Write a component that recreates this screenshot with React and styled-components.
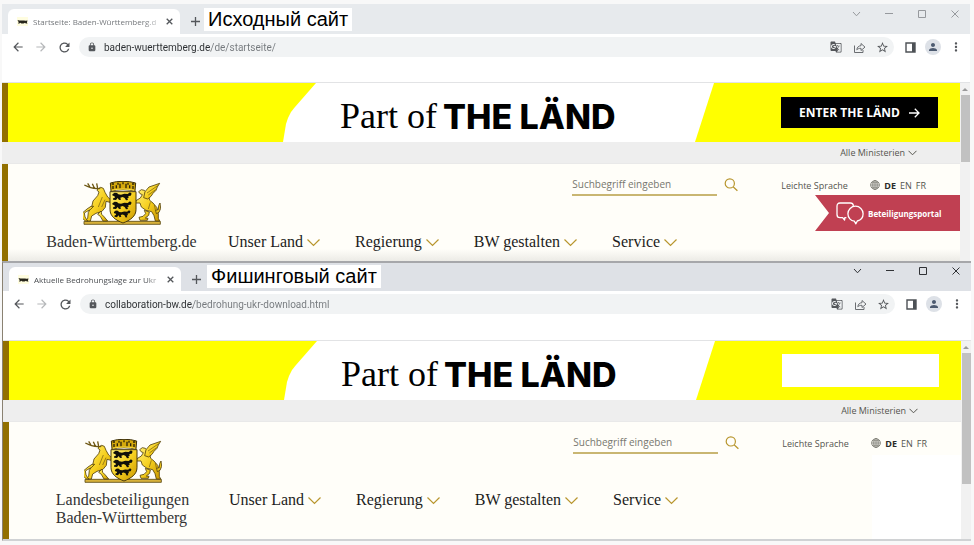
import React from "react";
import styled, { createGlobalStyle, css } from "styled-components";
import {
  MdArrowBack,
  MdArrowForward,
  MdRefresh,
  MdLock,
  MdGTranslate,
  MdStarBorder,
  MdPerson,
  MdMoreVert,
} from "react-icons/md";

const sans = `"Open Sans", "Noto Sans", sans-serif`;
const chromeSans = `Roboto, "Open Sans", sans-serif`;
const serif = `"Liberation Serif", serif`;
const gold = "#b8962e";

const GlobalStyle = createGlobalStyle`
  * { box-sizing: border-box; }
  body { margin: 0; background: #f8f8f8; }
  button, input { font: inherit; color: inherit; border: 0; padding: 0; margin: 0; background: none; }
  button { cursor: pointer; }
  a { color: inherit; text-decoration: none; }
  svg { display: block; flex: none; }
`;

const Page = styled.main`
  padding: 4px 3px 4px 2px;
  font-family: ${sans};
  font-size: 10px;
`;

const Window = styled.section`
  background: #fff;
  ${(p) =>
    p.$front
      ? css`
          border-top: 2px solid #a6a7aa;
          border-left: 1px solid #8a8272;
          border-bottom: 2px solid #d0d2d4;
        `
      : css`
          margin-right: 1px;
        `}
`;

const TabStrip = styled.header`
  display: flex;
  align-items: flex-start;
  height: ${(p) => (p.$front ? 28 : 30)}px;
  padding: 0 7px 0 6px;
  background: ${(p) => (p.$front ? "#dee1e6" : "#e7eaed")};
`;

const Tab = styled.div`
  display: flex;
  align-items: center;
  align-self: stretch;
  gap: 5px;
  width: 172px;
  margin-top: ${(p) => (p.$front ? 4 : 5)}px;
  padding: 0 7px 0 9px;
  border-radius: 6px 6px 0 0;
  background: #fff;
  color: ${(p) => (p.$front ? "#4b4e52" : "#75787c")};
`;

const TabTitle = styled.span`
  flex: 1;
  white-space: nowrap;
  font-size: 8px;
  mask-image: linear-gradient(90deg, #000 88%, rgba(0, 0, 0, 0.15));
`;

const IconButton = styled.button`
  display: grid;
  place-items: center;
  width: ${(p) => p.$size || 16}px;
  height: ${(p) => p.$size || 16}px;
  border-radius: 50%;
  color: ${(p) => p.$color || "#54575b"};
  background: ${(p) => p.$bg || "none"};
`;

const NewTab = styled(IconButton)`
  margin: ${(p) => (p.$front ? "8px 3px 0 7px" : "9px 1px 0 7px")};
`;

const Caption = styled.h2`
  margin: ${(p) => (p.$front ? 2 : 4)}px 0 0;
  padding: 0 4px;
  background: #fff;
  color: #000;
  font: 400 20px/23px "Liberation Sans", Arial, sans-serif;
  white-space: nowrap;
`;

const WindowControls = styled.div`
  display: flex;
  gap: 17px;
  margin-left: auto;
  margin-top: ${(p) => (p.$front ? 0 : 2)}px;
`;

const Toolbar = styled.div`
  display: flex;
  align-items: flex-start;
  height: ${(p) => (p.$front ? 50 : 49)}px;
  padding: 3px 6px 0 8px;
  border-bottom: 1px solid #e2e3e5;
`;

const NavButtons = styled.div`
  display: flex;
  gap: 7px;
  margin: 2px 7px 0 0;
`;

const AddressBar = styled.div`
  flex: 1;
  display: flex;
  align-items: center;
  height: 20px;
  padding: 0 4px 0 8px;
  border-radius: 10px;
  background: #f1f3f4;
  color: #54575b;
`;

const AddressInput = styled.input`
  flex: 1;
  min-width: 0;
  margin-left: 7px;
  outline: 0;
  font-family: ${chromeSans};
  color: transparent;
  background: linear-gradient(90deg, #2b2e31 ${(p) => p.$host}px, #74787c ${(p) => p.$host}px);
  background-clip: text;
`;

const AddressActions = styled.div`
  display: flex;
  gap: 7px;
`;

const BrowserActions = styled.div`
  display: flex;
  gap: 7px;
  margin: 2px 0 0 8px;
`;

const Viewport = styled.div`
  display: flex;
`;

const Site = styled.div`
  position: relative;
  flex: 1;
  min-width: 0;
  color: #55554f;
`;

const ScrollTrack = styled.div`
  display: flex;
  flex-direction: column;
  align-items: center;
  width: 10px;
  background: #f1f1f1;
`;

const ScrollArrow = styled.span`
  margin: 5px 0 4px;
  border: 3px solid transparent;
  border-top: 0;
  border-bottom-color: #9a9a9a;
`;

const ScrollThumb = styled.span`
  align-self: stretch;
  margin-left: 1px;
  height: ${(p) => p.$length}px;
  background: #c1c1c1;
`;

const Banner = styled.div`
  display: flex;
  align-items: center;
  justify-content: space-between;
  height: 59px;
  padding: 0 22px 0 275px;
  border-left: 6px solid #927000;
  background: #ff0;
`;

const BannerPanel = styled.a`
  display: flex;
  align-items: center;
  align-self: stretch;
  gap: 6px;
  width: 431px;
  padding-left: 57px;
  color: #000;
  background: #fff;
  clip-path: polygon(
    33px 0, 100% 0, calc(100% - 19px) 100%, 0 100%,
    3px 41px, 5px 35px, 8px 29px, 12px 24px
  );
  white-space: nowrap;
`;

const BannerSerif = styled.span`
  padding-top: 8px;
  font: 400 36px/59px ${serif};
`;

const BannerHeavy = styled.span`
  padding-top: 8px;
  font: 800 34px/59px Inter, sans-serif;
`;

const EnterButton = styled.a`
  display: flex;
  align-items: center;
  justify-content: center;
  gap: 9px;
  width: 157px;
  height: ${(p) => (p.$blank ? 33 : 31)}px;
  background: ${(p) => (p.$blank ? "#fff" : "#000")};
  color: #fff;
  font-size: 12px;
  font-weight: 700;
  white-space: nowrap;
`;

const MinistryBar = styled.div`
  display: flex;
  justify-content: flex-end;
  height: 22px;
  padding-right: 43px;
  border-bottom: 1px solid #e9e9e9;
  background: #eee;
`;

const MinistryButton = styled.button`
  display: flex;
  align-items: center;
  gap: 3px;
  font-size: 9px;
`;

const SiteHeader = styled.div`
  position: relative;
  display: flex;
  padding: 0 34px ${(p) => (p.$front ? 12 : 9)}px 31px;
  border-left: 6px solid #927000;
  background: ${(p) =>
    p.$front
      ? "#fffef9"
      : "linear-gradient(#fffef9 calc(100% - 12px), #ecebe6)"};
`;

const Brand = styled.a`
  display: flex;
  flex-direction: column;
  align-items: center;
  gap: 8px;
  width: 165px;
  padding-top: 17px;
  color: #333;
  font: 400 16px/18px ${serif};
  white-space: nowrap;
`;

const HeaderMain = styled.div`
  flex: 1;
  display: flex;
  flex-direction: column;
  padding-left: 24px;
`;

const Utilities = styled.div`
  display: flex;
  justify-content: flex-end;
  align-items: center;
  height: 32px;
  padding-top: 10px;
`;

const SearchForm = styled.form`
  display: flex;
  align-items: center;
  gap: 6px;
`;

const SearchInput = styled.input`
  width: 145px;
  height: 22px;
  border-bottom: 2px solid #c9b672;
  outline: 0;
  &::placeholder { color: #77776f; opacity: 1; }
`;

const EasyLink = styled.a`
  width: 89px;
  margin-left: 42px;
  font-size: 9px;
`;

const Languages = styled.nav`
  display: flex;
  align-items: center;
  gap: 4px;
  font-size: 9px;
`;

const Language = styled.a`
  font-weight: ${(p) => (p.$current ? 700 : 400)};
  color: ${(p) => (p.$current ? "#2c2c2a" : "inherit")};
`;

const MainNav = styled.nav`
  display: flex;
  gap: 35px;
  margin-top: 36px;
`;

const NavItem = styled.button`
  display: flex;
  align-items: center;
  gap: 4px;
  color: #1c1c1c;
  font: 400 16px/20px ${serif};
  white-space: nowrap;
`;

const Portal = styled.a`
  position: absolute;
  top: 31px;
  right: 0;
  display: flex;
  align-items: center;
  gap: 4px;
  width: 145px;
  height: 36px;
  padding-left: 21px;
  background: #c04052;
  clip-path: polygon(0 0, 100% 0, 100% 100%, 0 100%, 14px 50%);
  color: #fff;
  font-size: 8px;
  font-weight: 700;
`;

const BlankPatch = styled.div`
  position: absolute;
  top: 33px;
  right: 0;
  bottom: 0;
  width: 89px;
  background: #fff;
`;

const Stroke = ({ w, h, d, color = "currentColor", weight = 1 }) => (
  <svg width={w} height={h} viewBox={`0 0 ${w} ${h}`} fill="none" stroke={color} strokeWidth={weight} aria-hidden="true">
    <path d={d} />
  </svg>
);

const Chevron = ({ small }) =>
  small ? (
    <Stroke w={9} h={6} d="M.5 .8 4.5 4.8 8.5 .8" />
  ) : (
    <Stroke w={13} h={9} d="M.5 1.5 6.5 7.5 12.5 1.5" color={gold} weight={1.2} />
  );

const Favicon = () => (
  <svg width="11" height="11" viewBox="0 0 11 11" aria-hidden="true">
    <path d="M0 1h11v9H0z" fill="#fffde0" />
    <path d="M.5 4l2 .6L4 4.4h3l1.4.4 2.1-.4-.6 2 .6 1.2H8.8L8 6.8 6.6 7.6H4.4L3.2 6.8l-.8.8H1l.7-1.4z" fill="#26241a" />
  </svg>
);

const ShareIcon = () => (
  <svg width="13" height="13" viewBox="0 0 13 13" fill="none" stroke="#6a6d71" aria-hidden="true">
    <path d="M1.5 4.5v7h8.5v-2.5" />
    <path d="M3.8 8.8c.3-2.6 1.8-4 4.2-4.1V2.5l4 3.6-4 3.4V7.3c-1.8 0-3 .3-4.2 1.5z" />
  </svg>
);

const PanelIcon = () => (
  <svg width="11" height="11" viewBox="0 0 11 11" aria-hidden="true">
    <path d="M1 1h9v9H1z" fill="#fff" stroke="#4d5156" strokeWidth="1.4" />
    <path d="M7 1h3v9H7z" fill="#4d5156" />
  </svg>
);

const GlobeIcon = () => (
  <svg width="10" height="10" viewBox="0 0 10 10" fill="none" stroke="#77776f" strokeWidth=".8" aria-hidden="true">
    <circle cx="5" cy="5" r="4.4" />
    <ellipse cx="5" cy="5" rx="2.2" ry="4.4" />
    <path d="M5 .6v8.8M.6 5h8.8M1.2 2.8h7.6M1.2 7.2h7.6" />
  </svg>
);

const SearchIcon = () => (
  <svg width="14" height="14" viewBox="0 0 14 14" fill="none" stroke={gold} strokeWidth="1.2" aria-hidden="true">
    <circle cx="5.8" cy="5.4" r="4.6" />
    <path d="M9.1 8.8 13.4 12.8" />
  </svg>
);

const BubblesIcon = () => (
  <svg width="28" height="23" viewBox="0 0 28 23" fill="none" stroke="#fff" strokeWidth="1.3" strokeLinejoin="round" aria-hidden="true">
    <path d="M17.5 3.8C17.2 2 16.2 1 14.4 1H4C2 1 1 2.2 1 4.2v8.2c0 2 1 3.2 3 3.2h2.6l2 2.4.2-2.4h1.6" />
    <path d="M19.5 4.2a7.6 7.6 0 0 0-7.6 7.6c0 4 3 7 6.4 7.4l1.6 2.6 1.4-2.8c3.4-.8 5.8-3.6 5.8-7.2a7.6 7.6 0 0 0-7.6-7.6z" />
  </svg>
);

const lion =
  "M110 58l7-5 7 1 4 4 8 1 10-3 10 1 7-5 5 4-3 6-7 1 1 5-4 2 2 5-6 1-4-7-6-3-7 2 2 6-6 1-4-6-5 6-9-1 1-5 5-1-2-5-5-1z";

const Crest = () => (
  <svg width="78" height="44" viewBox="22 18 234 132" strokeLinejoin="round" role="img" aria-label="Wappen">
    <defs>
      <linearGradient id="crestGold" x1="0" y1="0" x2="1" y2="1">
        <stop offset="0" stopColor="#fff07a" />
        <stop offset=".5" stopColor="#f6d020" />
        <stop offset="1" stopColor="#c89600" />
      </linearGradient>
    </defs>
    <path d="M25 139h229v9H25z" fill="#d8b23a" stroke="#5c4a12" strokeWidth="2.5" />
    <g fill="url(#crestGold)" stroke="#54420c" strokeWidth="2.5">
      <path d="M66 42l9-5 8 3 5 12 8 14 9 8-2 8-12-3-2 18-10 12-18 6-13 8-4 15h-10l-3-3 5-5 2-18 10-16 4-18 14-16 4-11-6-5z" />
      <path d="M54 94l-10 10-12 6-6 4 2 12 8 12h-7l-8-8-1-16 14-12 12-8z" />
      <path d="M76 108l2 10 8 8 10 12H82l-8-14-8-6z" />
      <path d="M218 58l-12-12-9-2-8 6 4 6 7 3-6 10-13 8-2 7 14 0 4 12 14 10 17 4 7 12 4 16h13l-4-8 0-14-4-18-12-14-10-8z" />
      <path d="M204 68l4-18 12-14 32-11-7 11-4 10-9 9-6 9-10 8z" />
      <path d="M206 106l4 10-8 8-12 3 3 9h22l2-6-8-1 10-8 2-10z" />
      <path d="M240 106l8-2 1-12 4-8 2 16-5 12-8 4z" />
    </g>
    <g fill="none" stroke="#6d5714" strokeWidth="2">
      <path d="M74 40C60 42 40 38 26 30M56 39l-6-13M43 36l-7-11M66 40l-3-15" strokeWidth="4" />
      <path d="M214 54l32-22M218 60l22-16M80 66l-12 30M88 74l-10 22M224 82l-6 20M236 90l4 18" />
    </g>
    <path d="M103 50h78v54c0 20-18 32-39 40-21-8-39-20-39-40z" fill="url(#crestGold)" stroke="#4b3b0b" strokeWidth="3" />
    <g fill="#11100a">
      <path d={lion} />
      <path d={lion} transform="translate(0 27)" />
      <path d={lion} transform="translate(20 59) scale(.86 .9)" />
    </g>
    <path d="M104 24l18-4 20-1 20 1 18 4-2 24c-22-5-50-5-72 0z" fill="#d5a90c" stroke="#3f320a" strokeWidth="3" />
    <path d="M112 33v9M122 31v9M133 26v14M151 26v14M162 31v9M172 33v9M108 27h7M127 23v6M157 23v6M169 27h7M142 22v6" stroke="#2d240a" strokeWidth="4" />
    <path d="M108 46c20-5 48-5 68 0" fill="none" stroke="#ffe24a" strokeWidth="3" />
  </svg>
);

const navItems = ["Unser Land", "Regierung", "BW gestalten", "Service"];

function Browser({ front, title, caption, url, host, thumb, brand }) {
  const control = front ? "#303236" : "#96999d";
  return (
    <Window $front={front}>
      <TabStrip $front={front}>
        <Tab $front={front}>
          <Favicon />
          <TabTitle>{title}</TabTitle>
          <IconButton $size={8} aria-label="Close tab">
            <Stroke w={7} h={7} d="M.7 .7 6.3 6.3M6.3 .7 .7 6.3" weight={1.3} />
          </IconButton>
        </Tab>
        <NewTab $front={front} aria-label="New tab">
          <Stroke w={9} h={9} d="M4.5 0V9M0 4.5H9" weight={1.3} />
        </NewTab>
        <Caption $front={front}>{caption}</Caption>
        <WindowControls $front={front}>
          <IconButton $color={control} aria-label="Search tabs">
            <Stroke w={9} h={6} d="M1 1 4.5 4.8 8 1" />
          </IconButton>
          <IconButton $color={control} aria-label="Minimize">
            <Stroke w={8} h={2} d="M0 .5H8" />
          </IconButton>
          <IconButton $color={control} aria-label="Maximize">
            <Stroke w={8} h={8} d="M.5 .5h7v7h-7z" />
          </IconButton>
          <IconButton $color={control} aria-label="Close">
            <Stroke w={8} h={8} d="M.5 .5 7.5 7.5M7.5 .5 .5 7.5" />
          </IconButton>
        </WindowControls>
      </TabStrip>

      <Toolbar $front={front}>
        <NavButtons>
          <IconButton aria-label="Back"><MdArrowBack size={14} /></IconButton>
          <IconButton $color="#b6b8ba" aria-label="Forward"><MdArrowForward size={14} /></IconButton>
          <IconButton aria-label="Reload"><MdRefresh size={15} /></IconButton>
        </NavButtons>
        <AddressBar>
          <MdLock size={10} />
          <AddressInput aria-label="Address" defaultValue={url} $host={host} />
          <AddressActions>
            <IconButton aria-label="Translate"><MdGTranslate size={12} /></IconButton>
            <IconButton aria-label="Share"><ShareIcon /></IconButton>
            <IconButton aria-label="Bookmark"><MdStarBorder size={13} /></IconButton>
          </AddressActions>
        </AddressBar>
        <BrowserActions>
          <IconButton aria-label="Side panel"><PanelIcon /></IconButton>
          <IconButton $bg="#dde1e7" $color="#4c5a70" aria-label="Profile"><MdPerson size={12} /></IconButton>
          <IconButton aria-label="Menu"><MdMoreVert size={14} /></IconButton>
        </BrowserActions>
      </Toolbar>

      <Viewport>
        <Site>
          <Banner>
            <BannerPanel href="#laend">
              <BannerSerif>Part of</BannerSerif>
              <BannerHeavy>THE LÄND</BannerHeavy>
            </BannerPanel>
            {front ? (
              <EnterButton as="div" $blank />
            ) : (
              <EnterButton href="#enter">
                ENTER THE LÄND
                <Stroke w={11} h={10} d="M0 5H10M5.8 .8 10 5 5.8 9.2" weight={1.3} />
              </EnterButton>
            )}
          </Banner>
          <MinistryBar>
            <MinistryButton>
              Alle Ministerien
              <Chevron small />
            </MinistryButton>
          </MinistryBar>
          <SiteHeader $front={front}>
            {front ? (
              <BlankPatch />
            ) : (
              <Portal href="#portal">
                <BubblesIcon />
                Beteiligungsportal
              </Portal>
            )}
            <Brand href="#home">
              <Crest />
              <span>
                {brand.map((line) => (
                  <div key={line}>{line}</div>
                ))}
              </span>
            </Brand>
            <HeaderMain>
              <Utilities>
                <SearchForm role="search">
                  <SearchInput aria-label="Suchbegriff" placeholder="Suchbegriff eingeben" />
                  <IconButton type="button" aria-label="Suchen"><SearchIcon /></IconButton>
                </SearchForm>
                <EasyLink href="#leichte-sprache">Leichte Sprache</EasyLink>
                <Languages aria-label="Sprache">
                  <GlobeIcon />
                  <Language href="#de" $current>DE</Language>
                  <Language href="#en">EN</Language>
                  <Language href="#fr">FR</Language>
                </Languages>
              </Utilities>
              <MainNav>
                {navItems.map((item) => (
                  <NavItem key={item}>
                    {item}
                    <Chevron />
                  </NavItem>
                ))}
              </MainNav>
            </HeaderMain>
          </SiteHeader>
        </Site>
        <ScrollTrack>
          <ScrollArrow />
          <ScrollThumb $length={thumb} />
        </ScrollTrack>
      </Viewport>
    </Window>
  );
}

export default function App() {
  return (
    <>
      <GlobalStyle />
      <Page>
        <Browser
          title="Startseite: Baden-Württemberg.d"
          caption="Исходный сайт"
          url="baden-wuerttemberg.de/de/startseite/"
          host={107}
          thumb={67}
          brand={["Baden-Württemberg.de"]}
        />
        <Browser
          front
          title="Aktuelle Bedrohungslage zur Ukr"
          caption="Фишинговый сайт"
          url="collaboration-bw.de/bedrohung-ukr-download.html"
          host={88}
          thumb={131}
          brand={["Landesbeteiligungen", "Baden-Württemberg"]}
        />
      </Page>
    </>
  );
}
